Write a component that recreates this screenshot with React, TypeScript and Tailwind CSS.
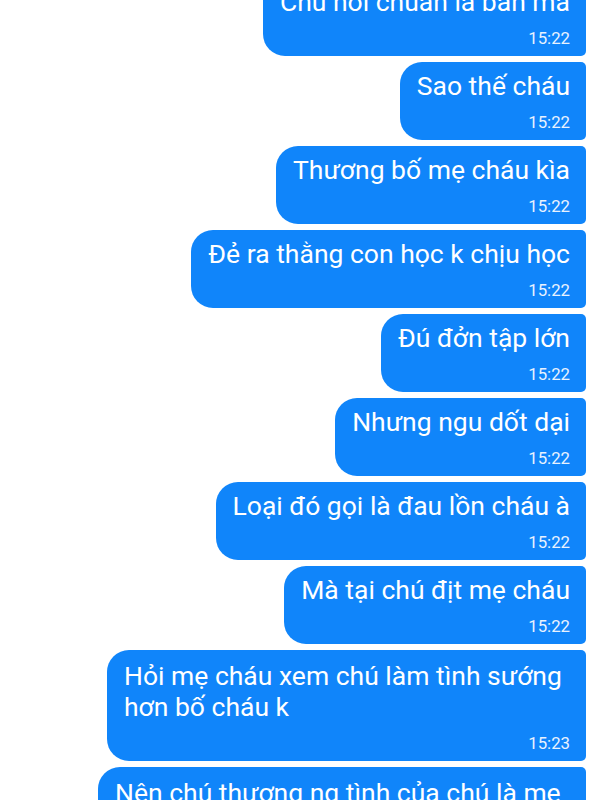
import React from "react";

const msgs: { lines: string[]; time: string; w?: string }[] = [
  { lines: ["Chú nói chuẩn là bản mà"], time: "15:22" },
  { lines: ["Sao thế cháu"], time: "15:22" },
  { lines: ["Thương bố mẹ cháu kìa"], time: "15:22" },
  { lines: ["Đẻ ra thằng con học k chịu học"], time: "15:22" },
  { lines: ["Đú đởn tập lớn"], time: "15:22" },
  { lines: ["Nhưng ngu dốt dại"], time: "15:22" },
  { lines: ["Loại đó gọi là đau lồn cháu à"], time: "15:22" },
  { lines: ["Mà tại chú địt mẹ cháu"], time: "15:22" },
  { lines: ["Hỏi mẹ cháu xem chú làm tình sướng", "hơn bố cháu k"], time: "15:23", w: "w-[479px] pt-[10px]" },
  { lines: ["Nên chú thương ng tình của chú là mẹ", "cháu"], time: "15:23", w: "w-[488px] pt-[10px]" },
];

export default function App() {
  return (
    <div
      className="w-[600px] h-[800px] overflow-hidden bg-white"
      style={{ fontFamily: "Roboto, 'Noto Sans', sans-serif" }}
    >
      <div className="flex flex-col items-end gap-[6px] pr-[14px] mt-[-22px]">
        {msgs.map((m, i) => (
          <div
            key={i}
            className={`bg-[#1085fa] text-white rounded-l-[22px] rounded-r-[5px] pl-[17px] pr-[16px] pt-[8px] pb-[8px] flex flex-col ${m.w ?? ""}`}
          >
            <div className="text-[26.5px] leading-[31px] text-left whitespace-nowrap">
              {m.lines.map((l, j) => (
                <div key={j}>{l}</div>
              ))}
            </div>
            <div className="text-[16.8px] leading-[20px] mt-[11px] text-right text-[#e8f2ff]">
              {m.time}
            </div>
          </div>
        ))}
      </div>
    </div>
  );
}
